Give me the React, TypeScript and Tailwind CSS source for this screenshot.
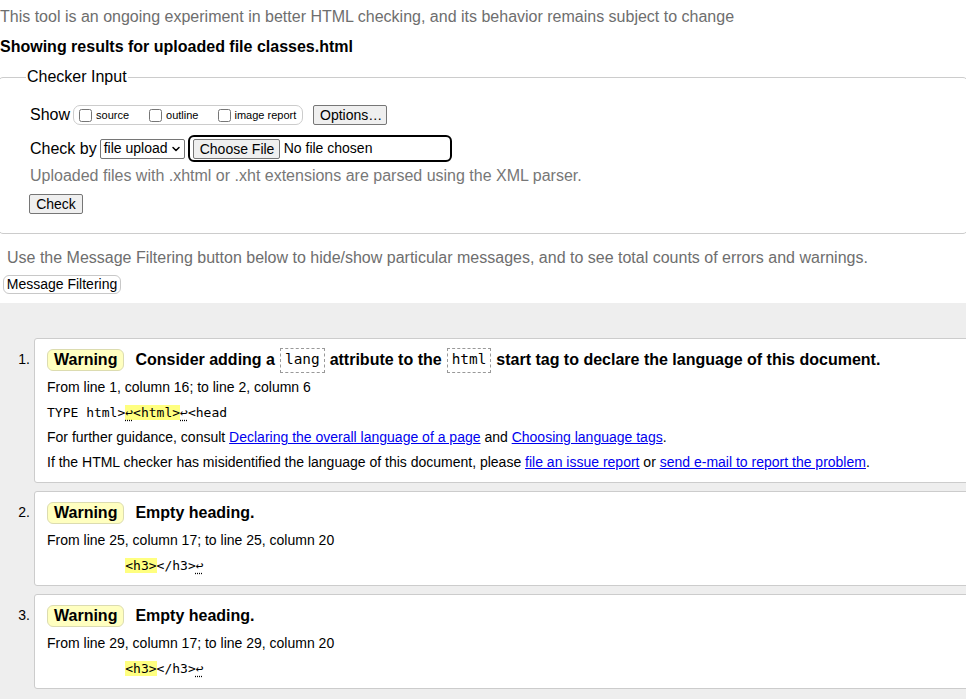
import { ChevronDown } from 'lucide-react'

const sans = "font-['Liberation_Sans',Arial,sans-serif]"
const mono = "font-['DejaVu_Sans_Mono',monospace]"

function Btn({ children, className = '' }: { children: React.ReactNode; className?: string }) {
  return (
    <button
      type="button"
      className={`h-[20px] bg-[#efefef] border border-[#767676] rounded-[2px] px-[6px] text-[14px] leading-[18px] text-black whitespace-nowrap ${className}`}
    >
      {children}
    </button>
  )
}

function Badge() {
  return (
    <span className="inline-flex items-center h-[22px] px-[6px] bg-[#ffffc0] border border-[#dcdcb0] rounded-[6px] font-bold text-[16px]">
      Warning
    </span>
  )
}

function Code({ children }: { children: React.ReactNode }) {
  return (
    <code className={`${mono} inline-flex items-center h-[25px] px-[4px] mx-[5px] border border-dashed border-[#999] text-[14.4px] font-normal`}>
      {children}
    </code>
  )
}

function Ret({ hl = false }: { hl?: boolean }) {
  return <span className={`underline decoration-dotted underline-offset-[3px] ${hl ? 'bg-[#ffff80]' : ''}`}>↩</span>
}

function Card({ n, children }: { n: number; children: React.ReactNode }) {
  return (
    <div className="flex">
      <div className="w-[34px] shrink-0 pt-[11px] pr-[4px] text-right text-[14px] leading-[20px]">{n}.</div>
      <div className="flex-1 -mr-[10px] bg-white border border-[#cccccc] rounded-[3px] pt-[8px] pb-[7px] pl-[12px]">
        {children}
      </div>
    </div>
  )
}

function Heading({ children }: { children: React.ReactNode }) {
  return (
    <div className="h-[28px] pb-[2px] flex items-center whitespace-nowrap">
      <Badge />
      <span className="ml-[11px] font-bold text-[16px] flex items-center">{children}</span>
    </div>
  )
}

function Line({ children }: { children: React.ReactNode }) {
  return <div className="h-[25px] flex items-center text-[14px] whitespace-nowrap">{children}</div>
}

function Extract({ children }: { children: React.ReactNode }) {
  return (
    <div className="h-[25px] flex items-center">
      <span className={`${mono} text-[13px] whitespace-pre`}>{children}</span>
    </div>
  )
}

export default function App() {
  return (
    <div className={`${sans} w-[966px] h-[699px] overflow-hidden bg-white text-black flex flex-col`}>
      <p className="mt-[7px] leading-[20px] text-[16px] text-[#6e6e6e] whitespace-nowrap">
        This tool is an ongoing experiment in better HTML checking, and its behavior remains subject to change
      </p>
      <p className="mt-[10px] leading-[20px] text-[16px] font-bold">Showing results for uploaded file classes.html</p>

      <fieldset className="mt-[10px] -mx-[2px] border border-[#cccccc] rounded-[5px] pl-[31px] pb-[17px]">
        <legend className="px-[1px] -ml-[4px] text-[16px] leading-[20px]">Checker Input</legend>

        <div className="mt-[18px] h-[20px] flex items-center">
          <span className="text-[16px]">Show</span>
          <span className="ml-[3px] h-[20px] w-[230px] flex items-center border border-[#cccccc] rounded-[7px] px-[5px] text-[11px]">
            <input type="checkbox" className="w-[13px] h-[13px] m-0" />
            <span className="ml-[4px]">source</span>
            <input type="checkbox" className="w-[13px] h-[13px] m-0 ml-[20px]" />
            <span className="ml-[4px]">outline</span>
            <input type="checkbox" className="w-[13px] h-[13px] m-0 ml-[20px]" />
            <span className="ml-[3px]">image report</span>
          </span>
          <Btn className="ml-[10px] w-[74px]">Options…</Btn>
        </div>

        <div className="mt-[10px] h-[27px] flex items-center">
          <span className="text-[16px]">Check by</span>
          <span className="ml-[3px] h-[20px] w-[85px] flex items-center justify-between border border-[#767676] rounded-[2px] pl-[3px] pr-[2px] text-[14px]">
            file upload
            <ChevronDown className="w-[12px] h-[12px]" strokeWidth={3} />
          </span>
          <span className="ml-[3px] h-[27px] w-[264px] flex items-center border-2 border-black rounded-[6px] pl-[3px]">
            <Btn className="w-[87px] px-[4px]">Choose File</Btn>
            <span className="ml-[4px] text-[14px] whitespace-nowrap">No file chosen</span>
          </span>
        </div>

        <p className="mt-[4px] leading-[20px] text-[16px] text-[#777]">
          Uploaded files with .xhtml or .xht extensions are parsed using the XML parser.
        </p>
        <Btn className="mt-[8px] w-[54px] -ml-[1px]">Check</Btn>
      </fieldset>

      <p className="mt-[14px] ml-[7px] leading-[20px] text-[16px] text-[#6e6e6e] whitespace-nowrap">
        Use the Message Filtering button below to hide/show particular messages, and to see total counts of errors and warnings.
      </p>
      <div className="mt-[7px] ml-[3px] flex">
        <button type="button" className="h-[19px] w-[118px] bg-white border border-[#c8c8c8] rounded-[6px] text-[14px] leading-[17px]">
          Message Filtering
        </button>
      </div>

      <div className="mt-[9px] flex-1 bg-[#eeeeee] pt-[35px] flex flex-col gap-[8px]">
        <Card n={1}>
          <Heading>
            Consider adding a<Code>lang</Code>attribute to the<Code>html</Code>start tag to declare the language of this document.
          </Heading>
          <Line>From line 1, column 16; to line 2, column 6</Line>
          <Extract>
            TYPE html&gt;<Ret hl /><span className="bg-[#ffff80]">&lt;html&gt;</span><Ret />&lt;head
          </Extract>
          <Line>
            For further guidance, consult&nbsp;
            <a className="text-[#0000ee] underline">Declaring the overall language of a page</a>&nbsp;and&nbsp;
            <a className="text-[#0000ee] underline">Choosing language tags</a>.
          </Line>
          <Line>
            If the HTML checker has misidentified the language of this document, please&nbsp;
            <a className="text-[#0000ee] underline">file an issue report</a>&nbsp;or&nbsp;
            <a className="text-[#0000ee] underline">send e-mail to report the problem</a>.
          </Line>
        </Card>

        {[
          ['25', 2],
          ['29', 3],
        ].map(([line, n]) => (
          <Card key={n} n={n as number}>
            <Heading>Empty heading.</Heading>
            <Line>
              From line {line}, column 17; to line {line}, column 20
            </Line>
            <Extract>
              {'          '}
              <span className="bg-[#ffff80]">&lt;h3&gt;</span>&lt;/h3&gt;<Ret />
            </Extract>
          </Card>
        ))}
      </div>
    </div>
  )
}
